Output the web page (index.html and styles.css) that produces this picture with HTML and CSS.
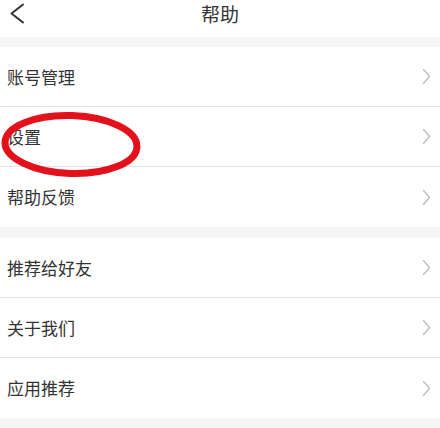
FILE: index.html
```html
<!DOCTYPE html>
<html lang="zh-CN">
<head>
<meta charset="utf-8">
<title>帮助</title>
<link rel="stylesheet" href="styles.css">
</head>
<body>
<div class="page">
  <header class="topbar">
    <svg class="back" width="16" height="22" viewBox="0 0 16 22" aria-hidden="true">
      <polyline points="13,1.5 1.5,10.5 13,19.5" fill="none" stroke="#333" stroke-width="2" stroke-linecap="round" stroke-linejoin="round"/>
    </svg>
    <h1 class="title">帮助</h1>
  </header>

  <section class="group group-first">
    <div class="row"><span class="label">账号管理</span><svg class="chev" width="9" height="17" viewBox="0 0 9 17"><polyline points="1.5,1.5 7.5,8.5 1.5,15.5" fill="none" stroke="#c2c2c2" stroke-width="1.6" stroke-linecap="round" stroke-linejoin="round"/></svg></div>
    <div class="row"><span class="label">设置</span><svg class="chev" width="9" height="17" viewBox="0 0 9 17"><polyline points="1.5,1.5 7.5,8.5 1.5,15.5" fill="none" stroke="#c2c2c2" stroke-width="1.6" stroke-linecap="round" stroke-linejoin="round"/></svg></div>
    <div class="row"><span class="label">帮助反馈</span><svg class="chev" width="9" height="17" viewBox="0 0 9 17"><polyline points="1.5,1.5 7.5,8.5 1.5,15.5" fill="none" stroke="#c2c2c2" stroke-width="1.6" stroke-linecap="round" stroke-linejoin="round"/></svg></div>
    <svg class="mark" width="150" height="80" viewBox="0 0 150 80" aria-hidden="true">
      <ellipse cx="71" cy="37.5" rx="66" ry="29" fill="none" stroke="#e2111b" stroke-width="7" transform="rotate(2 71 37.5)"/>
    </svg>
  </section>

  <section class="group group-second">
    <div class="row"><span class="label">推荐给好友</span><svg class="chev" width="9" height="17" viewBox="0 0 9 17"><polyline points="1.5,1.5 7.5,8.5 1.5,15.5" fill="none" stroke="#c2c2c2" stroke-width="1.6" stroke-linecap="round" stroke-linejoin="round"/></svg></div>
    <div class="row"><span class="label">关于我们</span><svg class="chev" width="9" height="17" viewBox="0 0 9 17"><polyline points="1.5,1.5 7.5,8.5 1.5,15.5" fill="none" stroke="#c2c2c2" stroke-width="1.6" stroke-linecap="round" stroke-linejoin="round"/></svg></div>
    <div class="row"><span class="label">应用推荐</span><svg class="chev" width="9" height="17" viewBox="0 0 9 17"><polyline points="1.5,1.5 7.5,8.5 1.5,15.5" fill="none" stroke="#c2c2c2" stroke-width="1.6" stroke-linecap="round" stroke-linejoin="round"/></svg></div>
  </section>
</div>
</body>
</html>
```

FILE: styles.css
```css
html, body {
  margin: 0;
  padding: 0;
  background: #f5f5f6;
}

body {
  font-family: "Noto Sans CJK SC", "Noto Sans", "Liberation Sans", sans-serif;
  color: #333;
}

.page {
  width: 440px;
  height: 428px;
  overflow: hidden;
}

.topbar {
  position: relative;
  height: 37px;
  background: #fff;
  display: flex;
  justify-content: center;
  align-items: flex-start;
}

.back {
  position: absolute;
  left: 10px;
  top: 3px;
}

.title {
  margin: 0;
  padding-top: 2px;
  font-size: 19px;
  font-weight: 400;
  line-height: 24px;
  color: #333;
}

.group {
  position: relative;
  background: #fff;
}

.group-first {
  margin-top: 10px;
}

.group-second {
  margin-top: 11px;
}

.row {
  height: 59px;
  display: flex;
  align-items: center;
  justify-content: space-between;
  padding: 0 9px 0 7px;
  border-bottom: 1px solid #e4e4e4;
}

.row:last-of-type {
  height: 60px;
  border-bottom: none;
}

.label {
  font-size: 17px;
  line-height: 24px;
  color: #333;
}

.chev {
  display: block;
}

.mark {
  position: absolute;
  left: 0;
  top: 60px;
}
```
